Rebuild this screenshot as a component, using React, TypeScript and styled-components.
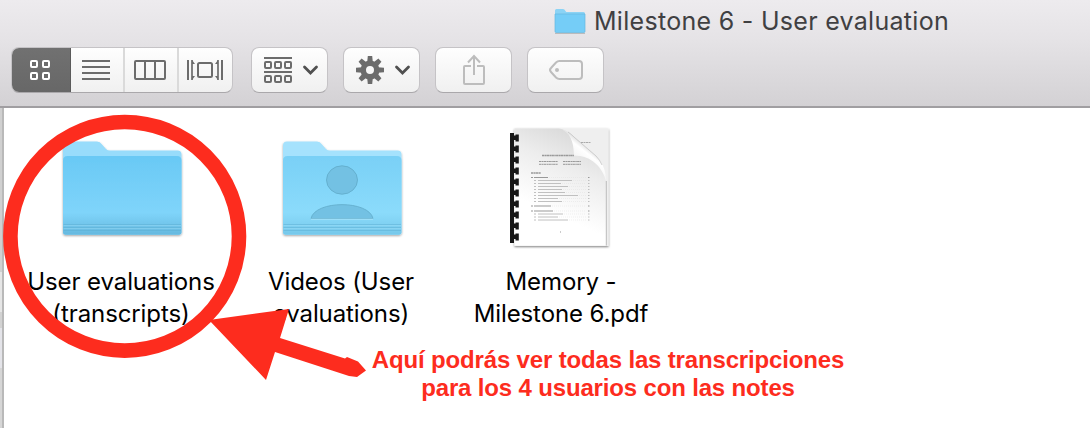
import React from "react";
import styled, { createGlobalStyle } from "styled-components";

const Global = createGlobalStyle`
  * { box-sizing: border-box; }
  body { margin: 0; background: #fff; overflow: hidden; }
`;

const Window = styled.main`
  position: relative;
  display: flex;
  flex-direction: column;
  width: 1090px;
  height: 428px;
  overflow: hidden;
  font-family: Inter, "Liberation Sans", sans-serif;
`;

const Header = styled.header`
  height: 108px;
  flex: none;
  padding-left: 11px;
  background: linear-gradient(#edebee 0, #e5e3e6 40px, #d3d1d4 107px);
  border-bottom: 2px solid #a09ea1;
`;

const TitleBar = styled.div`
  display: flex;
  align-items: center;
  height: 47px;
  padding: 0 0 6px 543px;
  gap: 8px;
`;

const Title = styled.h1`
  margin: 0;
  font-size: 25px;
  line-height: 30px;
  font-weight: 400;
  letter-spacing: 0.29px;
  color: #404042;
  white-space: nowrap;
`;

const Toolbar = styled.div`
  display: flex;
  gap: 15px;
`;

const Control = styled.div`
  display: flex;
  height: 46px;
  overflow: hidden;
  border: 1px solid #c5c3c6;
  border-bottom-color: #aaa8ab;
  border-radius: 8px;
  background: linear-gradient(#fefefe, #f0f0f0);
`;

const Segments = styled(Control)`
  width: 222px;
  margin-right: 3px;
`;

const ToolButton = styled(Control)<{ $indent?: number }>`
  width: 77px;
  padding-left: ${(p) => p.$indent ?? 0}px;
  align-items: center;
  justify-content: center;
`;

const Segment = styled.div<{ $width: number; $active?: boolean }>`
  display: flex;
  flex: none;
  align-items: center;
  justify-content: center;
  width: ${(p) => p.$width}px;
  height: 46px;
  margin: -1px 0;
  padding-right: ${(p) => (p.$active ? 1 : 2)}px;
  background: ${(p) => (p.$active ? "linear-gradient(#717171, #676767)" : "none")};
  border-right: ${(p) => (p.$active ? "1px solid #5b5b5b" : "2px solid #dadada")};
  &:first-child { margin-left: -1px; }
  &:last-child { border-right-color: transparent; padding-right: 0; }
`;

const Body = styled.div`
  display: flex;
  flex: 1;
`;

const Sidebar = styled.div`
  width: 4px;
  border-right: 2px solid #b9b9b9;
  background: linear-gradient(#d0d0d0 0 164px, #e6e6e6 164px 204px, #d2d2d2 204px 220px, #e4e4e9 220px 260px, #d6d6d6 260px);
`;

const Files = styled.div`
  display: flex;
  padding: 16px 0 0 8px;
`;

const FileItem = styled.div`
  display: flex;
  flex-direction: column;
  align-items: center;
  width: 220px;
`;

const Label = styled.div`
  margin: 11px 2px 0 0;
  font-size: 24px;
  line-height: 32px;
  letter-spacing: -0.1px;
  color: #000;
  text-align: center;
  white-space: pre-line;
`;

const Drawing = styled.svg`
  display: block;
  flex: none;
  overflow: visible;
`;

const PageDrawing = styled(Drawing)`
  margin-right: 4px;
`;

const MarkLayer = styled.svg`
  position: absolute;
  inset: 0;
  pointer-events: none;
`;

const Note = styled.p`
  position: absolute;
  left: 358px;
  top: 346px;
  width: 500px;
  margin: 0;
  font: 700 24px/28px "Liberation Sans", Arial, sans-serif;
  letter-spacing: -0.16px;
  color: #fd2c1e;
  text-align: center;
  white-space: pre-line;
`;

function SmallFolder() {
  return (
    <Drawing width="32" height="26" viewBox="0 0 32 26">
      <path d="M1 24V2.500Q1 1 2.500 1H9q1.500 0 2.500 2l.8 1H29.500q1.500 0 1.500 1.500V24Z" fill="#8bd3f5" />
      <path d="M1 6H31V23.500q0 1-1 1H2q-1 0-1-1Z" fill="#75cdf7" stroke="#65b8e0" strokeWidth=".7" />
      <path d="M1 25.500H31" stroke="#aaa" opacity=".7" />
    </Drawing>
  );
}

function Folder({ person = false }: { person?: boolean }) {
  const id = person ? "shared" : "plain";
  return (
    <Drawing width="140" height="131" viewBox="0 0 140 131">
      <defs>
        <linearGradient id={id} x1="0" y1="0" x2="0" y2="1">
          <stop offset="0" stopColor={person ? "#79d0f6" : "#69c9f5"} />
          <stop offset=".72" stopColor={person ? "#8bdbfb" : "#7fd4fa"} />
          <stop offset="1" stopColor={person ? "#76c8ea" : "#66b9df"} />
        </linearGradient>
        <filter id={id + "-shadow"} x="-10%" y="-10%" width="120%" height="125%">
          <feDropShadow dx="0" dy="1" stdDeviation="1" floodOpacity=".35" />
        </filter>
      </defs>
      <g filter={`url(#${id}-shadow)`}>
        <path d="M11 109V21.500Q11 17.500 15 17.500H45q3 0 5 3l4 4.500q1.500 1.600 4 1.600H125.500q4 0 4 4V108q0 2.700-2.700 2.700H13.700Q11 110.700 11 108Z" fill={person ? "#a5e2fd" : "#98dcfb"} />
        <path d="M11 36.500q0-4.500 4.500-4.500H125q4.500 0 4.500 4.500V108q0 2.700-2.700 2.700H13.700Q11 110.700 11 108Z" fill={`url(#${id})`} />
      </g>
      <path d="M11.500 100.500H129M11.500 103.500H129M11.500 106.500H129" stroke="#5bacd0" strokeWidth="1" opacity=".45" />
      <path d="M11.500 101.500H129M11.500 104.500H129" stroke="#a5e2fa" strokeWidth=".7" opacity=".5" />
      {person && (
        <g fill="#73c1e3" stroke="#5fa9c8" strokeWidth=".8">
          <ellipse cx="70" cy="56" rx="15.500" ry="14.200" />
          <path d="M39 94.500C43 76 97 76 101 94.500Z" />
          <path d="M39 95.200H101" stroke="#b2e8fd" />
        </g>
      )}
    </Drawing>
  );
}

const contents = [
  [47, 58, 0], [50, 82, 1], [53, 71, 1], [56, 78, 1], [59, 72, 1], [62, 75, 1],
  [65, 88, 1], [68, 68, 1], [71, 72, 1], [75.500, 61, 0], [80.500, 63, 0],
  [83.500, 73, 1], [86.500, 68, 1], [89.500, 78, 1],
];

function Pdf() {
  return (
    <PageDrawing width="140" height="131" viewBox="0 0 140 131">
      <defs>
        <linearGradient id="paper" x1=".75" y1="0" x2=".4" y2="1">
          <stop offset="0" stopColor="#d6d6d6" />
          <stop offset=".35" stopColor="#ededed" />
          <stop offset=".75" stopColor="#fff" />
        </linearGradient>
        <linearGradient id="curl" gradientUnits="userSpaceOnUse" x1="86" y1="34" x2="97" y2="20">
          <stop offset="0" stopColor="#f4f4f4" />
          <stop offset=".6" stopColor="#fff" />
          <stop offset="1" stopColor="#d5d5d5" />
        </linearGradient>
        <filter id="page-shadow" x="-10%" y="-10%" width="120%" height="120%">
          <feDropShadow dx="0" dy="1" stdDeviation="1" floodOpacity=".5" />
        </filter>
      </defs>
      <rect x="24.500" y="4.500" width="94" height="117.500" fill="#efefef" filter="url(#page-shadow)" />
      <path d="M24.500 4.500H69C79 6 84 14 84 31L101 34C111 38 116 47 116 57V121.500H24.500Z" fill="url(#paper)" />
      <path d="M69 4.500C76 6 80 9 84 13L106 32C113 39 116 47 116 57C113 44 101 31 84 31.500C84 18 80 7 69 4.500Z" fill="url(#curl)" />
      <path d="M78 8Q81 10 84 13L106 32Q110 36 112 41" fill="none" stroke="#bdbdbd" strokeWidth=".7" />
      <path d="M116.300 57V121.500" stroke="#b5b5b5" strokeWidth=".9" />
      <path d="M91 18.500H101" stroke="#aaa" strokeWidth="1" strokeDasharray="2 .5" />
      <g stroke="#999" strokeDasharray="2.500 .4 1.500 .3">
        <path d="M52 31.500H84" strokeWidth="1.500" />
        <path d="M49 37.500H68M73 37.500H91M49 40.300H68M73 40.300H91" strokeWidth="1" />
        <path d="M41 49H51" strokeWidth="1.400" />
      </g>
      {contents.map(([y, end, nested]) => (
        <g key={y} stroke={nested ? "#c0c0c0" : "#999"} strokeWidth="1">
          <path d={`M${nested ? 44 : 41} ${y + 6.500}h2M${nested ? 48 : 44} ${y + 6.500}H${end}`} />
          <path d={`M${end + 1} ${y + 6.500}H96`} stroke="#e0e0e0" strokeWidth=".5" strokeDasharray="1 1" />
          <path d={`M98 ${y + 6.500}h1.500`} />
        </g>
      ))}
      <path d="M70 108h1" stroke="#999" />
      <rect x="20" y="9" width="4" height="110" fill="#171717" />
      {Array.from({ length: 10 }, (_, i) => (
        <path key={i} d={`M23.500 ${11.500 + i * 11}H25.500V${10.500 + i * 11}H28.800V${17.500 + i * 11}H25.500V${16 + i * 11}H23.500Z`} fill="#171717" />
      ))}
    </PageDrawing>
  );
}

function GridIcon() {
  return (
    <Drawing width="20" height="20" viewBox="0 0 20 20" fill="none" stroke="#fff" strokeWidth="2">
      {[1, 13].map((x) => [1, 13].map((y) => <rect key={`${x}${y}`} x={x} y={y} width="6" height="6" rx="1" />))}
    </Drawing>
  );
}

function ListIcon() {
  return (
    <Drawing width="28" height="20" viewBox="0 0 28 20" stroke="#6c6c6c" strokeWidth="2">
      <path d="M0 1H28M0 7H28M0 13H28M0 19H28" />
    </Drawing>
  );
}

function ColumnsIcon() {
  return (
    <Drawing width="32" height="20" viewBox="0 0 32 20" fill="none" stroke="#6c6c6c" strokeWidth="2">
      <rect x="1" y="1" width="30" height="18" rx="1" />
      <path d="M11 1V19M21 1V19" />
    </Drawing>
  );
}

function FlowIcon() {
  return (
    <Drawing width="36" height="20" viewBox="0 0 36 20" fill="none" stroke="#6c6c6c" strokeWidth="2">
      <rect x="11" y="3" width="14" height="14" rx="1.500" />
      <path d="M1 0V20M35 0V20" />
      <path d="M5 0V20M31 0V20" strokeWidth="1.700" />
      <path d="M5 0L8 4H5ZM5 20L8 16H5ZM31 0L28 4H31ZM31 20L28 16H31Z" fill="#6c6c6c" stroke="none" />
    </Drawing>
  );
}

function ArrangeIcon() {
  return (
    <Drawing width="54" height="26" viewBox="0 0 54 26" fill="none" stroke="#6c6c6c" strokeWidth="2">
      <path d="M0 1H28M0 15H28" />
      {[1, 11, 21].map((x) => [5, 19].map((y) => <rect key={`${x}${y}`} x={x} y={y} width="6" height="6" rx="1" />))}
      <path d="M40.500 10L46.500 16L52.500 10" stroke="#505050" strokeWidth="2.800" strokeLinecap="round" />
    </Drawing>
  );
}

function GearIcon() {
  return (
    <Drawing width="54" height="28" viewBox="0 0 54 28">
      <path fillRule="evenodd" fill="#6c6c6c" d="M14 4.500a9.500 9.500 0 1 0 0 19a9.500 9.500 0 0 0 0-19ZM14 10a4 4 0 1 1 0 8a4 4 0 0 1 0-8Z" />
      {Array.from({ length: 8 }, (_, i) => (
        <path key={i} d="M11.200 6L11.800 0H16.200L16.800 6Z" fill="#6c6c6c" transform={`rotate(${i * 45} 14 14)`} />
      ))}
      <path d="M40.500 11L46.500 17L52.500 11" fill="none" stroke="#505050" strokeWidth="2.800" strokeLinecap="round" />
    </Drawing>
  );
}

function ShareIcon() {
  return (
    <Drawing width="22" height="30" viewBox="0 0 22 30" fill="none" stroke="#bdbdbd" strokeWidth="2">
      <path d="M8 11H2Q1 11 1 12V28Q1 29 2 29H20Q21 29 21 28V12Q21 11 20 11H14M11 20V1M5 7.500L11 1L17 7.500" />
    </Drawing>
  );
}

function TagIcon() {
  return (
    <Drawing width="34" height="20" viewBox="0 0 34 20" fill="none" stroke="#bdbdbd" strokeWidth="2">
      <path d="M10.500 1H30Q33 1 33 4V16Q33 19 30 19H10.500Q8.500 19 7 17.500L2 12Q0 10 2 8L7 2.500Q8.500 1 10.500 1Z" />
      <circle cx="8" cy="10" r="2" fill="#bdbdbd" stroke="none" />
    </Drawing>
  );
}

export default function App() {
  return (
    <Window>
      <Global />
      <Header>
        <TitleBar>
          <SmallFolder />
          <Title>Milestone 6 - User evaluation</Title>
        </TitleBar>
        <Toolbar>
          <Segments>
            <Segment $width={60} $active><GridIcon /></Segment>
            <Segment $width={54}><ListIcon /></Segment>
            <Segment $width={54}><ColumnsIcon /></Segment>
            <Segment $width={54}><FlowIcon /></Segment>
          </Segments>
          <ToolButton $indent={3}><ArrangeIcon /></ToolButton>
          <ToolButton $indent={3}><GearIcon /></ToolButton>
          <ToolButton $indent={1}><ShareIcon /></ToolButton>
          <ToolButton $indent={1}><TagIcon /></ToolButton>
        </Toolbar>
      </Header>
      <Body>
        <Sidebar />
        <Files>
          <FileItem>
            <Folder />
            <Label>{"User evaluations\n(transcripts)"}</Label>
          </FileItem>
          <FileItem>
            <Folder person />
            <Label>{"Videos (User\nevaluations)"}</Label>
          </FileItem>
          <FileItem>
            <Pdf />
            <Label>{"Memory -\nMilestone 6.pdf"}</Label>
          </FileItem>
        </Files>
      </Body>
      <MarkLayer width="1090" height="428" viewBox="0 0 1090 428">
        <circle cx="124.700" cy="236.300" r="114.300" fill="none" stroke="#fd2c1e" strokeWidth="14.600" />
        <path d="M209 320L289 309L280 338L345 358.500L347 357L358 361.500L366 370.500L357 377L349 376L275 352L266 380Z" fill="#fd2c1e" />
      </MarkLayer>
      <Note>{"Aquí podrás ver todas las transcripciones\npara los 4 usuarios con las notes"}</Note>
    </Window>
  );
}
